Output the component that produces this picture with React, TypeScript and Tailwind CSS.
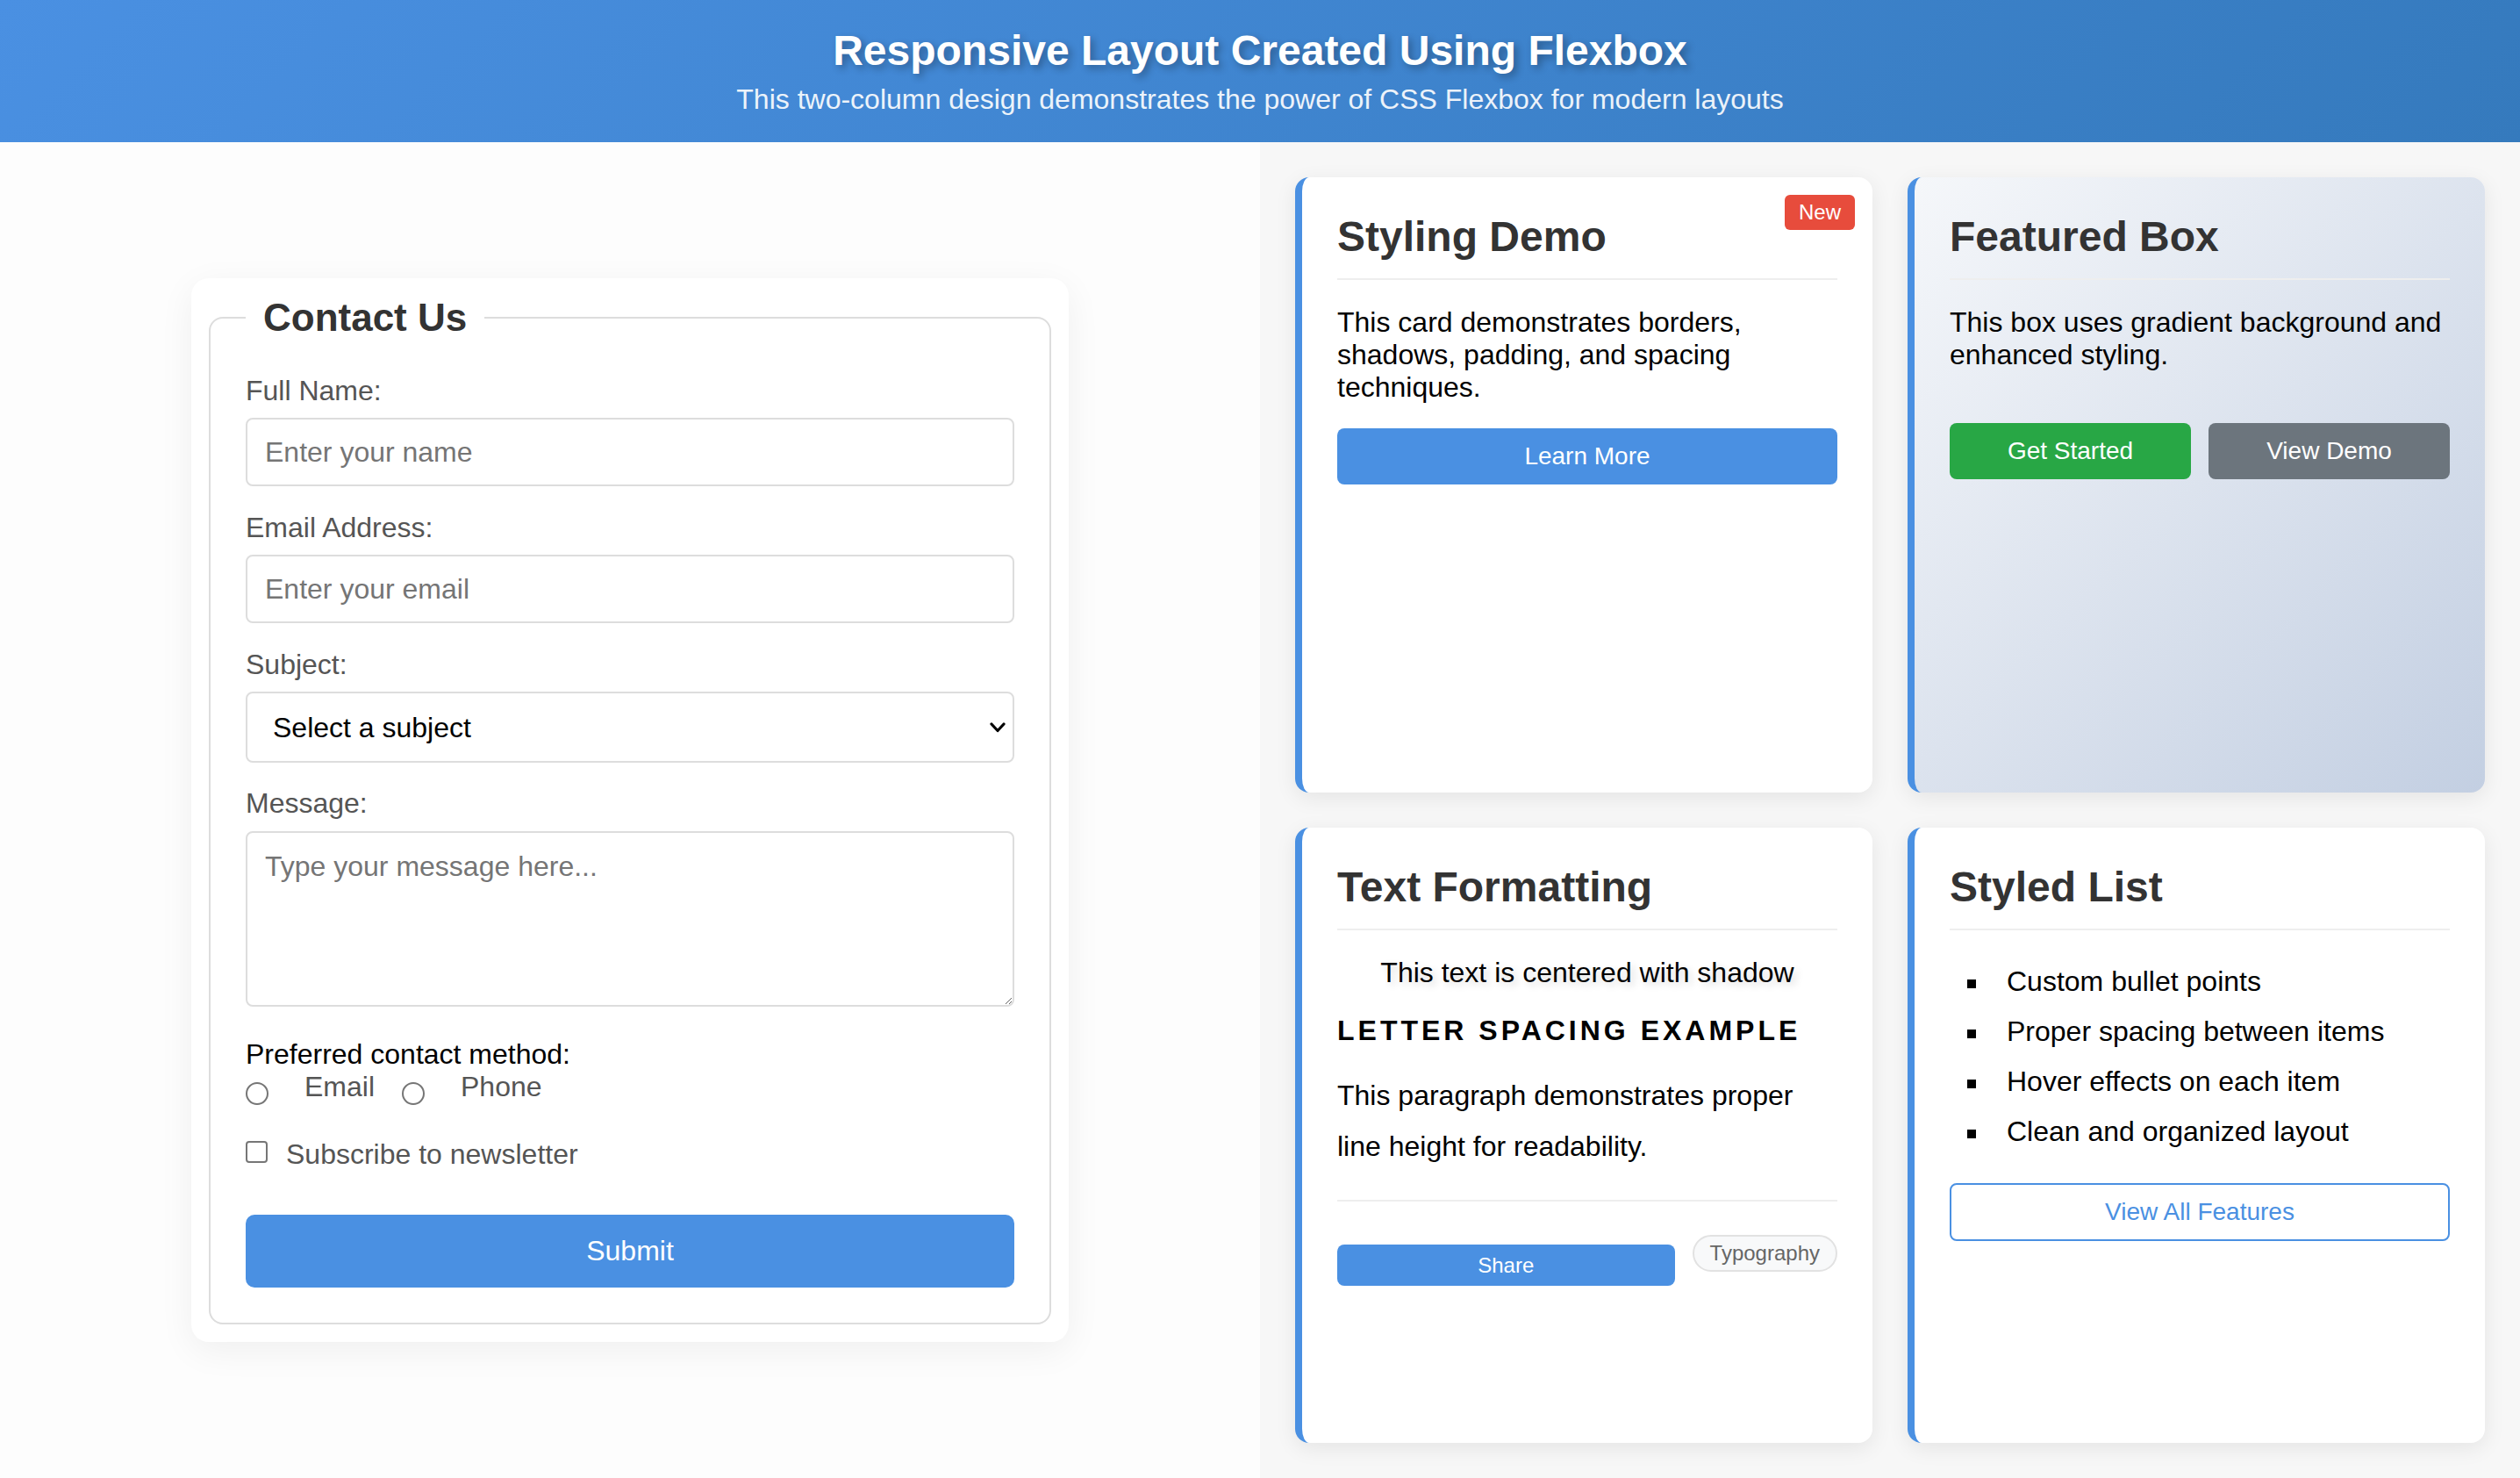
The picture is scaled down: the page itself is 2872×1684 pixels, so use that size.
import React from "react";

function ChevronDown() {
  return (
    <svg width="18" height="12" viewBox="0 0 18 12" className="pointer-events-none absolute right-[10px] top-1/2 -translate-y-1/2">
      <polyline points="2,2 9,9.5 16,2" fill="none" stroke="#000" strokeWidth="3.2" strokeLinecap="round" strokeLinejoin="round" />
    </svg>
  );
}

function ContactForm() {
  const labelCls = "block text-[32px] text-[#555] mb-[12px]";
  const inputCls =
    "block w-full h-[78px] rounded-[8px] border-2 border-[#ddd] bg-white px-[20px] text-[32px] text-black placeholder:text-[#757575] outline-none";
  return (
    <form className="w-[1000px] rounded-[20px] bg-white p-[20px] shadow-[0_10px_40px_rgba(0,0,0,0.06)]">
      <fieldset className="rounded-[16px] border-2 border-[#ddd] p-[40px]">
        <legend className="px-[20px] text-[44px] font-bold text-[#333]">Contact Us</legend>

        <div className="mb-[29px]">
          <label className={labelCls}>Full Name:</label>
          <input type="text" placeholder="Enter your name" className={inputCls} />
        </div>

        <div className="mb-[29px]">
          <label className={labelCls}>Email Address:</label>
          <input type="email" placeholder="Enter your email" className={inputCls} />
        </div>

        <div className="mb-[28px]">
          <label className={labelCls}>Subject:</label>
          <div className="relative">
            <select
              defaultValue=""
              className="block h-[81px] w-full appearance-none rounded-[8px] border-2 border-[#ddd] bg-white pl-[29px] pr-[40px] text-[32px] text-black outline-none"
            >
              <option value="">Select a subject</option>
              <option value="general">General Inquiry</option>
              <option value="support">Support</option>
            </select>
            <ChevronDown />
          </div>
        </div>

        <div className="mb-[36px]">
          <label className="mb-[13px] block text-[32px] text-[#555]">Message:</label>
          <textarea
            placeholder="Type your message here..."
            className="block h-[200px] w-full rounded-[8px] border-2 border-[#ddd] bg-white px-[20px] py-[20px] text-[32px] text-black placeholder:text-[#757575] outline-none"
          />
        </div>

        <div>
          <div className="text-[32px] text-black">Preferred contact method:</div>
          <div className="flex items-start text-[32px]">
            <input type="radio" name="method" className="mt-[13px] h-[26px] w-[26px] appearance-none rounded-full border-2 border-[#767676] bg-white" />
            <span className="ml-[41px] text-[#555]">Email</span>
            <input type="radio" name="method" className="ml-[31px] mt-[13px] h-[26px] w-[26px] appearance-none rounded-full border-2 border-[#767676] bg-white" />
            <span className="ml-[41px] text-[#555]">Phone</span>
          </div>
        </div>

        <div className="mt-[38px] flex items-start text-[32px]">
          <input type="checkbox" className="mt-[3px] h-[25px] w-[25px] appearance-none rounded-[4px] border-2 border-[#767676] bg-white" />
          <span className="ml-[21px] text-[#555]">Subscribe to newsletter</span>
        </div>

        <button type="button" className="mt-[50px] block h-[83px] w-full rounded-[10px] bg-[#4a90e2] text-[32px] text-white">
          Submit
        </button>
      </fieldset>
    </form>
  );
}

const cardBase =
  "relative min-w-0 flex-1 basis-0 rounded-[16px] border-l-[8px] border-[#4a90e2] p-[40px] shadow-[0_6px_24px_rgba(0,0,0,0.08)]";
const titleCls = "mb-[30px] border-b-2 border-[#eee] pb-[20px] text-[48px] font-bold text-[#333]";

function StylingDemo() {
  return (
    <div className={cardBase + " bg-white"}>
      <span className="absolute right-[20px] top-[20px] rounded-[6px] bg-[#e74c3c] px-[16px] py-[6px] text-[24px] text-white">
        New
      </span>
      <h2 className={titleCls}>Styling Demo</h2>
      <p className="text-[32px] text-black">
        This card demonstrates borders, shadows, padding, and spacing techniques.
      </p>
      <button type="button" className="mt-[28px] block h-[64px] w-full rounded-[8px] bg-[#4a90e2] text-[28px] text-white">
        Learn More
      </button>
    </div>
  );
}

function FeaturedBox() {
  return (
    <div className={cardBase + " bg-[linear-gradient(135deg,#f5f7fa_0%,#c3cfe2_100%)]"}>
      <h2 className={titleCls}>Featured Box</h2>
      <p className="text-[32px] text-black">This box uses gradient background and enhanced styling.</p>
      <div className="mt-[59px] flex gap-[20px]">
        <button type="button" className="h-[64px] min-w-0 flex-1 rounded-[8px] bg-[#28a745] text-[28px] text-white">
          Get Started
        </button>
        <button type="button" className="h-[64px] min-w-0 flex-1 rounded-[8px] bg-[#6c757d] text-[28px] text-white">
          View Demo
        </button>
      </div>
    </div>
  );
}

function TextFormatting() {
  return (
    <div className={cardBase + " bg-white"}>
      <h2 className={titleCls}>Text Formatting</h2>
      <p className="mt-[2px] text-center text-[32px] text-black [text-shadow:4px_4px_8px_rgba(0,0,0,0.15)]">
        This text is centered with shadow
      </p>
      <p className="mt-[29px] text-[32px] font-bold uppercase tracking-[4px] text-black">Letter Spacing Example</p>
      <p className="mt-[27px] text-[32px] leading-[1.8] text-black">
        This paragraph demonstrates proper line height for readability.
      </p>
      <div className="mt-[32px] flex items-start gap-[20px] border-t-2 border-[#eee] pt-[38px]">
        <button type="button" className="mt-[11px] h-[47px] min-w-0 flex-1 rounded-[8px] bg-[#4a90e2] text-[24px] text-white">
          Share
        </button>
        <span className="flex h-[42px] items-center rounded-full border-2 border-[#e2e2e2] bg-[#f8f9fa] px-[18px] text-[24px] text-[#666]">
          Typography
        </span>
      </div>
    </div>
  );
}

function StyledList() {
  const items = ["Custom bullet points", "Proper spacing between items", "Hover effects on each item", "Clean and organized layout"];
  return (
    <div className={cardBase + " bg-white"}>
      <h2 className={titleCls}>Styled List</h2>
      <ul>
        {items.map((t) => (
          <li key={t} className="flex items-center py-[10px] text-[32px] text-black">
            <span className="ml-[20px] h-[10px] w-[10px] shrink-0 translate-y-[2px] bg-black" />
            <span className="ml-[35px]">{t}</span>
          </li>
        ))}
      </ul>
      <button type="button" className="mt-[30px] block h-[66px] w-full rounded-[8px] border-2 border-[#4a90e2] bg-transparent text-[28px] text-[#4a90e2]">
        View All Features
      </button>
    </div>
  );
}

export default function App() {
  return (
    <div className="flex min-h-screen flex-col font-['Liberation_Sans',Arial,sans-serif] leading-[normal]">
      <header className="bg-[linear-gradient(135deg,#4a90e2_0%,#357abd_100%)] py-[30px] text-center text-white">
        <h1 className="mb-[10px] text-[48px] font-bold [text-shadow:4px_4px_8px_rgba(0,0,0,0.3)]">
          Responsive Layout Created Using Flexbox
        </h1>
        <p className="text-[32px] opacity-90">
          This two-column design demonstrates the power of CSS Flexbox for modern layouts
        </p>
      </header>
      <main className="flex flex-1">
        <section className="flex w-1/2 shrink-0 items-center justify-center bg-[#fdfdfd]">
          <ContactForm />
        </section>
        <section className="flex w-1/2 shrink-0 flex-col gap-[40px] bg-[#f7f7f7] p-[40px]">
          <div className="flex min-h-0 flex-1 basis-0 gap-[40px]">
            <StylingDemo />
            <FeaturedBox />
          </div>
          <div className="flex min-h-0 flex-1 basis-0 gap-[40px]">
            <TextFormatting />
            <StyledList />
          </div>
        </section>
      </main>
    </div>
  );
}
